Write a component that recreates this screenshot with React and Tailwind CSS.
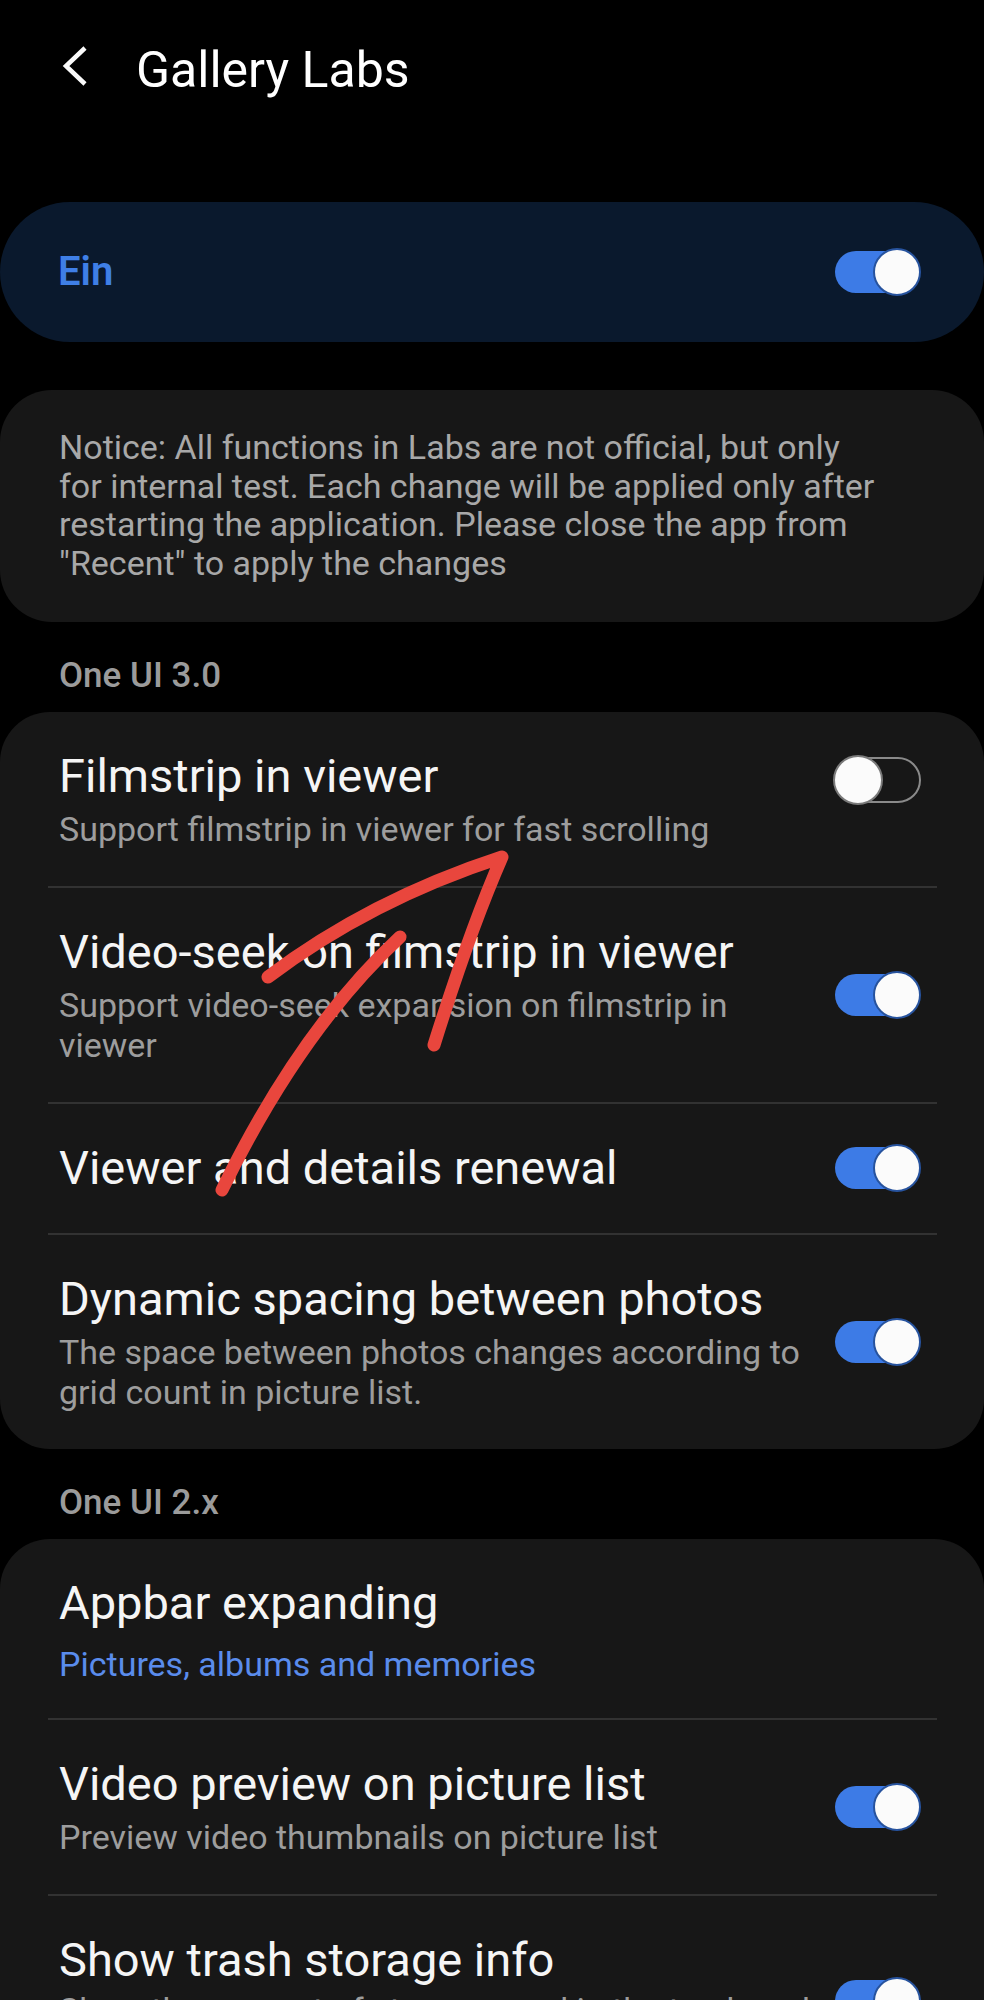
import React from 'react';

function Toggle({ on = true, className = '' }) {
  if (on) {
    return (
      <div className={`relative w-[86px] h-[48px] shrink-0 flex items-center ${className}`}>
        <div className="h-[42px] w-[80px] rounded-full bg-[#3d7be6]" />
        <div className="absolute right-0 top-0 w-[48px] h-[48px] rounded-full bg-[#fbfbfb] border-2 border-[#27539e]" />
      </div>
    );
  }
  return (
    <div className={`relative w-[88px] h-[50px] shrink-0 flex items-center ${className}`}>
      <div className="ml-[3px] h-[46px] w-[85px] rounded-full border-2 border-[#8a8a8a]" />
      <div className="absolute left-0 top-0 w-[50px] h-[50px] rounded-full bg-[#fbfbfb] border-2 border-[#7a7a7a]" />
    </div>
  );
}

function Row({ title, sub, subBlue, toggle, toggleOn = true, toggleClass = '', subGap = 'mt-[5px]', pb = 'pb-[37px]' }) {
  return (
    <div className={`flex items-center pl-[59px] pr-[63px] pt-[36px] ${pb}`}>
      <div className="flex-1 min-w-0">
        <div className="text-[47px] leading-[56px] text-[#f5f5f5] whitespace-nowrap">{title}</div>
        {sub && (
          <div className={`${subGap} text-[34px] leading-[40px] ${subBlue ? 'text-[#5a8cec]' : 'text-[#9d9d9d]'}`}>
            {sub.map((line) => (
              <div key={line} className="whitespace-nowrap">{line}</div>
            ))}
          </div>
        )}
      </div>
      {toggle && <Toggle on={toggleOn} className={toggleClass} />}
    </div>
  );
}

const Divider = () => <div className="ml-[48px] mr-[47px] h-[2px] bg-[#323232]" />;

function SectionLabel({ children }) {
  return (
    <div className="mt-[32px] mb-[14px] px-[59px] text-[35px] leading-[44px] font-medium text-[#9b9b9b]">
      {children}
    </div>
  );
}

export default function App() {
  return (
    <div className="relative w-[984px] h-[2000px] overflow-hidden bg-black font-['Roboto','Liberation_Sans',sans-serif]">
      {/* header */}
      <div className="h-[132px] flex items-center">
        <svg className="ml-[58px]" width="32" height="44" viewBox="0 0 32 44" fill="none">
          <path d="M27 4 L8 22 L27 40" stroke="#fafafa" strokeWidth="4.5" strokeLinejoin="miter" />
        </svg>
        <div className="ml-[46px] mt-[8px] text-[50px] leading-none text-white">Gallery Labs</div>
      </div>

      {/* master switch */}
      <div className="mt-[70px] h-[140px] rounded-full bg-[#0a192d] pl-[58px] pr-[63px] flex items-center justify-between">
        <span className="text-[40px] leading-none font-semibold text-[#3f7fe6]">Ein</span>
        <Toggle on />
      </div>

      {/* notice */}
      <div className="mt-[48px] rounded-[52px] bg-[#171717] px-[59px] pt-[38px] pb-[40px] text-[34px] leading-[38.5px] text-[#a8a8a8]">
        <div className="whitespace-nowrap">Notice: All functions in Labs are not official, but only</div>
        <div className="whitespace-nowrap">for internal test. Each change will be applied only after</div>
        <div className="whitespace-nowrap">restarting the application. Please close the app from</div>
        <div className="whitespace-nowrap">"Recent" to apply the changes</div>
      </div>

      <SectionLabel>One UI 3.0</SectionLabel>
      <div className="rounded-[50px] bg-[#171717]">
        <Row
          title="Filmstrip in viewer"
          sub={['Support filmstrip in viewer for fast scrolling']}
          toggle
          toggleOn={false}
          toggleClass="mb-[38px]"
        />
        <Divider />
        <Row
          title="Video-seek on filmstrip in viewer"
          sub={['Support video-seek expansion on filmstrip in', 'viewer']}
          toggle
        />
        <Divider />
        <Row title="Viewer and details renewal" toggle />
        <Divider />
        <Row
          title="Dynamic spacing between photos"
          sub={['The space between photos changes according to', 'grid count in picture list.']}
          toggle
        />
      </div>

      <SectionLabel>One UI 2.x</SectionLabel>
      <div className="rounded-[50px] bg-[#171717]">
        <Row
          title="Appbar expanding"
          sub={['Pictures, albums and memories']}
          subBlue
          subGap="mt-[13px]"
          pb="pb-[34px]"
        />
        <Divider />
        <Row
          title="Video preview on picture list"
          sub={['Preview video thumbnails on picture list']}
          toggle
        />
        <Divider />
        <Row
          title="Show trash storage info"
          sub={['Show the amount of storage used in the trash and', 'the remaining space']}
          subGap="mt-[2px]"
          toggle
        />
      </div>

      {/* hand-drawn annotation */}
      <svg
        className="absolute left-0 top-0 pointer-events-none"
        width="984"
        height="2000"
        viewBox="0 0 984 2000"
        fill="none"
      >
        <path
          d="M268 977 Q 370 900 502 857 Q 470 930 434 1045"
          stroke="#e9463d"
          strokeWidth="13"
          strokeLinecap="round"
          strokeLinejoin="round"
        />
        <path
          d="M222 1190 Q 300 1030 400 937"
          stroke="#e9463d"
          strokeWidth="13"
          strokeLinecap="round"
        />
      </svg>
    </div>
  );
}
